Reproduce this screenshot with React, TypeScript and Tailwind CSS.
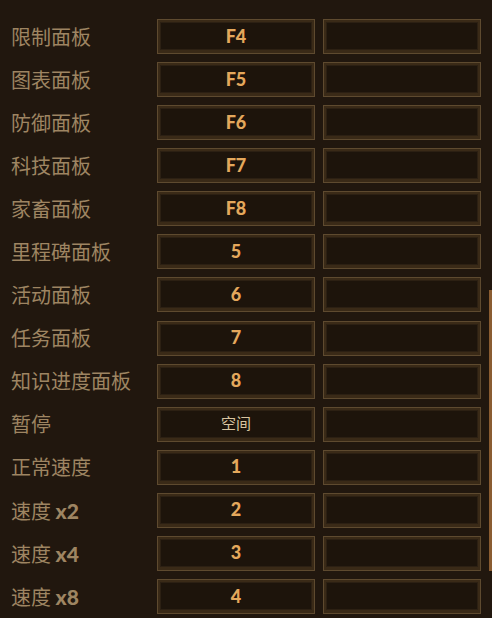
import React from "react";

interface Binding {
  label: string;
  suffix?: string;
  key1: string;
  cjkKey?: boolean;
}

const bindings: Binding[] = [
  { label: "限制面板", key1: "F4" },
  { label: "图表面板", key1: "F5" },
  { label: "防御面板", key1: "F6" },
  { label: "科技面板", key1: "F7" },
  { label: "家畜面板", key1: "F8" },
  { label: "里程碑面板", key1: "5" },
  { label: "活动面板", key1: "6" },
  { label: "任务面板", key1: "7" },
  { label: "知识进度面板", key1: "8" },
  { label: "暂停", key1: "空间", cjkKey: true },
  { label: "正常速度", key1: "1" },
  { label: "速度 ", suffix: "x2", key1: "2" },
  { label: "速度 ", suffix: "x4", key1: "3" },
  { label: "速度 ", suffix: "x8", key1: "4" },
];

const KeyBox: React.FC<{ children?: React.ReactNode }> = ({ children }) => (
  <div className="w-[158px] h-[35px] border border-[#5e4a2f] bg-[#3a2a17] p-[2px] pb-[3px]">
    <div className="w-full h-full bg-[#1d140b] border border-[#2c2013] flex items-center justify-center">
      {children}
    </div>
  </div>
);

const App: React.FC = () => {
  return (
    <div
      className="relative w-[492px] h-[618px] overflow-hidden bg-[#21170e]"
      style={{ fontFamily: "Lato, 'Noto Sans CJK SC', sans-serif" }}
    >
      <div className="flex flex-col gap-[8.08px] pt-[19px]">
        {bindings.map((b) => (
          <div key={b.label + b.key1} className="flex items-center h-[35px]">
            <div className="w-[157px] pl-[11px] text-[20px] leading-none text-[#9e8562] whitespace-nowrap">
              <span style={{ fontFamily: "'Noto Sans CJK SC', sans-serif" }}>{b.label}</span>
              {b.suffix && <span className="text-[21px] font-black">{b.suffix}</span>}
            </div>
            <KeyBox>
              {b.cjkKey ? (
                <span
                  className="text-[15px] text-[#d8c4a0]"
                  style={{ fontFamily: "'Noto Sans CJK SC', sans-serif" }}
                >
                  {b.key1}
                </span>
              ) : (
                <span className="text-[18px] font-black text-[#e4a85c]">{b.key1}</span>
              )}
            </KeyBox>
            <div className="ml-[8px]">
              <KeyBox />
            </div>
          </div>
        ))}
      </div>
      {/* scrollbar thumb */}
      <div className="absolute left-[489px] top-[290px] w-[3px] h-[281px] bg-[#8a5c31]" />
    </div>
  );
};

export default App;
